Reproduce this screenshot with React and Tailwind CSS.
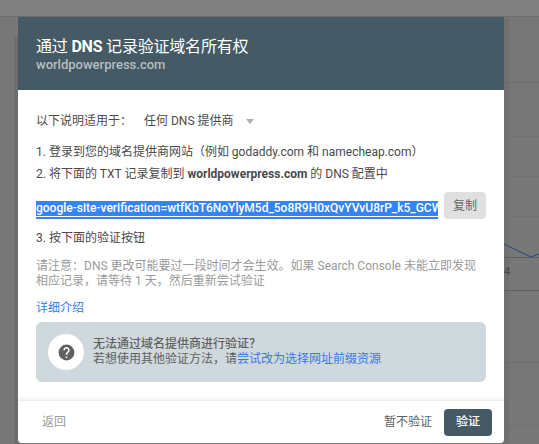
import React from "react";

const cjk = { fontFamily: 'Roboto, "Noto Sans CJK SC", sans-serif' };

export default function App() {
  return (
    <div className="relative w-[539px] h-[444px] overflow-hidden bg-[#777777]" style={cjk}>
      {/* page behind the overlay */}
      <div className="absolute left-0 top-0 w-full h-[17px] bg-[#808080] border-b border-[#6c6c6c]" />
      <div className="absolute left-[14px] top-[36px] bottom-0 w-[4px] bg-[#6e6e6e]" />
      <div className="absolute left-[504px] top-[18px] bottom-0 w-[5px] bg-[#707070]" />
      <div className="absolute left-[504px] top-[82px] right-0 h-px bg-[#6c6c6c]" />
      <div className="absolute left-[504px] top-[136px] right-0 h-px bg-[#717171]" />
      <div className="absolute left-[504px] top-[176px] right-0 h-px bg-[#717171]" />
      <div className="absolute left-[504px] top-[216px] right-0 h-px bg-[#717171]" />
      <div className="absolute left-[504px] top-[257px] right-0 h-px bg-[#5e5e5e]" />
      <div className="absolute left-[504px] top-[290px] right-0 h-px bg-[#5e5e5e]" />
      <div className="absolute left-[504px] top-[362px] right-0 h-px bg-[#6c6c6c]" />
      <div className="absolute left-[504px] top-[425px] right-0 h-px bg-[#6f6f6f]" />
      <svg className="absolute left-[504px] top-[240px]" width="35" height="20" viewBox="0 0 35 20">
        <path d="M0 4L27 17L35 14" fill="none" stroke="#1f4a86" strokeWidth="1" />
      </svg>
      <span className="absolute left-[504px] top-[266px] text-[11px] leading-[12px] text-[#444]">4</span>

      {/* dialog */}
      <div className="absolute left-[18px] top-[17px] w-[486px] h-[426px] bg-white flex flex-col rounded-b-sm">
        <div className="h-[73px] bg-[#455a64] px-[18px] pt-[20px] shrink-0">
          <div className="text-[16px] leading-[20px] text-white tracking-[-0.2px]">
            通过 <span className="font-bold">DNS</span> 记录验证域名所有权
          </div>
          <div className="text-[13px] leading-[16px] text-[#b5bdc1] font-medium">worldpowerpress.com</div>
        </div>

        <div className="flex-1 px-[18px] flex flex-col text-[12px] text-[#4a4a4a]">
          <div className="flex items-center h-[18px] mt-[22px]">
            <span className="w-[108px]">以下说明适用于：</span>
            <span>任何 DNS 提供商</span>
            <span className="ml-[12px] w-0 h-0 border-x-[4px] border-x-transparent border-t-[5px] border-t-[#b0b0b0]" />
          </div>
          <div className="leading-[18px] mt-[13px]">1. 登录到您的域名提供商网站（例如 godaddy.com 和 namecheap.com）</div>
          <div className="leading-[18px] mt-[4px]">
            2. 将下面的 TXT 记录复制到 <span className="font-bold">worldpowerpress.com</span> 的 DNS 配置中
          </div>

          <div className="flex items-center mt-[9px]">
            <div className="w-[402px] h-[27px] overflow-hidden border-b-2 border-[#3b82f6] pb-px flex items-end">
              <span className="bg-[#3584f7] text-white text-[12px] font-medium leading-[15px] whitespace-nowrap">
                google-site-verification=wtfKbT6NoYlyM5d_5o8R9H0xQvYVvU8rP_k5_GCWI
              </span>
            </div>
            <button className="ml-[6px] w-[42px] h-[27px] bg-[#e0e0e0] rounded-sm text-[12px] text-[#666]">复制</button>
          </div>

          <div className="leading-[18px] mt-[10px]">3. 按下面的验证按钮</div>
          <div className="leading-[15px] mt-[12px] text-[#9a9a9a] text-[12px]">
            请注意：DNS 更改可能要过一段时间才会生效。如果 Search Console 未能立即发现
            <br />
            相应记录，请等待 1 天，然后重新尝试验证
          </div>
          <div className="leading-[18px] mt-[10px] text-[#3b78e7]">详细介绍</div>

          <div className="mt-[5px] h-[60px] bg-[#cfd8dc] rounded-md flex items-center pl-[12px]">
            <div className="w-[36px] h-[36px] rounded-full bg-white flex items-center justify-center">
              <svg width="19" height="19" viewBox="0 0 24 24">
                <path fill="#616161" d="M12 2a10 10 0 100 20 10 10 0 000-20zm1 17h-2v-2h2v2zm2.07-7.75l-.9.92C13.45 12.9 13 13.5 13 15h-2v-.5c0-1.1.45-2.1 1.17-2.83l1.24-1.26c.37-.36.59-.86.59-1.41 0-1.1-.9-2-2-2s-2 .9-2 2H8c0-2.21 1.79-4 4-4s4 1.79 4 4c0 .88-.36 1.68-.93 2.25z" />
              </svg>
            </div>
            <div className="ml-[9px] leading-[15px] text-[#616161]">
              <div className="font-medium">无法通过域名提供商进行验证？</div>
              <div>
                若想使用其他验证方法，请<span className="text-[#3b78e7]">尝试改为选择网址前缀资源</span>
              </div>
            </div>
          </div>
        </div>

        <div className="h-[43px] shrink-0 border-t border-[#eceff1] shadow-[0_-2px_3px_rgba(0,0,0,0.05)] flex items-center pl-[24px] pr-[12px] text-[12px]">
          <span className="text-[#9a9a9a]">返回</span>
          <span className="ml-auto text-[#616161]">暂不验证</span>
          <button className="ml-[12px] w-[48px] h-[27px] bg-[#455a64] rounded-sm text-white font-medium">验证</button>
        </div>
      </div>
    </div>
  );
}
